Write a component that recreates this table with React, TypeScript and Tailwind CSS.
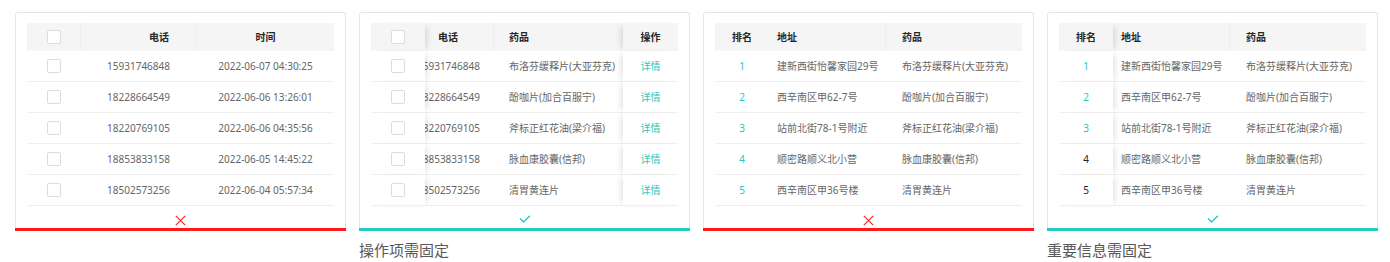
import { ReactNode } from 'react'

const phones = ['15931746848', '18228664549', '18220769105', '18853833158', '18502573256']
const times = ['2022-06-07 04:30:25', '2022-06-06 13:26:01', '2022-06-06 04:35:56', '2022-06-05 14:45:22', '2022-06-04 05:57:34']
const drugs = ['布洛芬缓释片(大亚芬克)', '酚咖片(加合百服宁)', '斧标正红花油(梁介福)', '脉血康胶囊(信邦)', '清胃黄连片']
const addrs = ['建新西街怡馨家园29号', '西辛南区甲62-7号', '站前北街78-1号附近', '顺密路顺义北小营', '西辛南区甲36号楼']

function Checkbox() {
  return <span className="block w-[14px] h-[14px] rounded-[2px] border border-[#dcdcdc] bg-white" />
}

function Card({ ok, caption, children }: { ok: boolean; caption?: string; children: ReactNode }) {
  return (
    <div className="w-[331px] flex flex-col">
      <div className="h-[216px] border-x border-t border-[#e6e6e6] rounded-t-[3px] pt-[10px] px-[11px]">
        {children}
        <div className="h-[22px] flex justify-center pt-[9px]">
          {ok ? (
            <svg width="12" height="8" viewBox="0 0 12 8" fill="none">
              <path d="M1 3.5 L4.5 7 L11 0.8" stroke="#1fc8bf" strokeWidth="1.3" />
            </svg>
          ) : (
            <svg width="11" height="11" viewBox="0 0 11 11" fill="none">
              <path d="M0.8 0.8 L10.2 10.2 M10.2 0.8 L0.8 10.2" stroke="#ff1a1a" strokeWidth="1.1" />
            </svg>
          )}
        </div>
      </div>
      <div className={`h-[3px] ${ok ? 'bg-[#22cbc2]' : 'bg-[#ff1a1a]'}`} />
      {caption && <p className="mt-[9px] text-[15px] leading-[20px] text-[#595959]">{caption}</p>}
    </div>
  )
}

// cell presets; text colour is set per cell
const head = 'h-[28px] flex items-center bg-[#f5f5f5] text-[10px] font-bold text-[#262626]'
const cell = 'h-[31px] flex items-center border-b border-[#efefef] text-[10px]'
const gray = 'text-[#666]'
const teal = 'text-[#1fc8bf]'
const rightShadow = 'relative z-10 shadow-[5px_0_6px_-3px_rgba(0,0,0,0.12)]'
const leftShadow = 'relative z-10 shadow-[-5px_0_6px_-3px_rgba(0,0,0,0.12)]'

function TableOne() {
  return (
    <div>
      <div className="flex">
        <div className={`${head} w-[54px] justify-center border-r border-[#eeeeee]`}><Checkbox /></div>
        <div className={`${head} w-[116px] justify-end pr-[27px] border-r border-[#eeeeee]`}>电话</div>
        <div className={`${head} w-[137px] justify-center`}>时间</div>
      </div>
      {phones.map((p, i) => (
        <div key={p} className="flex">
          <div className={`${cell} w-[54px] justify-center`}><Checkbox /></div>
          <div className={`${cell} ${gray} w-[116px] justify-end pr-[27px]`}>{p}</div>
          <div className={`${cell} ${gray} w-[137px] justify-center`}>{times[i]}</div>
        </div>
      ))}
    </div>
  )
}

function TableTwo() {
  return (
    <div>
      <div className="flex">
        <div className={`${head} w-[54px] justify-center ${rightShadow}`}><Checkbox /></div>
        <div className={`${head} w-[69px] pl-[13px] border-r border-[#eeeeee]`}>电话</div>
        <div className={`${head} w-[129px] pl-[15px]`}>药品</div>
        <div className={`${head} w-[55px] justify-center ${leftShadow}`}>操作</div>
      </div>
      {phones.map((p, i) => (
        <div key={p} className="flex">
          <div className={`${cell} w-[54px] justify-center bg-white ${rightShadow}`}><Checkbox /></div>
          <div className={`${cell} ${gray} w-[69px] overflow-hidden whitespace-nowrap`}><span className="-ml-[8px]">{p}</span></div>
          <div className={`${cell} ${gray} w-[129px] pl-[15px] whitespace-nowrap`}>{drugs[i]}</div>
          <div className={`${cell} ${teal} w-[55px] justify-center bg-white ${leftShadow}`}>详情</div>
        </div>
      ))}
    </div>
  )
}

function TableRank({ fixed }: { fixed: boolean }) {
  return (
    <div>
      <div className="flex">
        <div className={`${head} w-[54px] justify-center ${fixed ? rightShadow : ''}`}>排名</div>
        <div className={`${head} w-[117px] pl-[8px] border-r border-[#eeeeee]`}>地址</div>
        <div className={`${head} w-[136px] pl-[16px]`}>药品</div>
      </div>
      {addrs.map((a, i) => (
        <div key={a} className="flex">
          <div
            className={`${cell} w-[54px] justify-center bg-white ${fixed ? rightShadow : ''} ${
              !fixed || i < 3 ? teal : 'text-[#262626]'
            }`}
          >
            {i + 1}
          </div>
          <div className={`${cell} ${gray} w-[117px] pl-[8px] whitespace-nowrap`}>{a}</div>
          <div className={`${cell} ${gray} w-[136px] pl-[16px] whitespace-nowrap`}>{drugs[i]}</div>
        </div>
      ))}
    </div>
  )
}

export default function App() {
  return (
    <div
      className="w-[1390px] h-[262px] bg-white flex items-start gap-[13px] pl-[15px] pt-[12px] overflow-hidden"
      style={{ fontFamily: '"Noto Sans", "Noto Sans CJK SC", sans-serif' }}
    >
      <Card ok={false}>
        <TableOne />
      </Card>
      <Card ok caption="操作项需固定">
        <TableTwo />
      </Card>
      <Card ok={false}>
        <TableRank fixed={false} />
      </Card>
      <Card ok caption="重要信息需固定">
        <TableRank fixed />
      </Card>
    </div>
  )
}
